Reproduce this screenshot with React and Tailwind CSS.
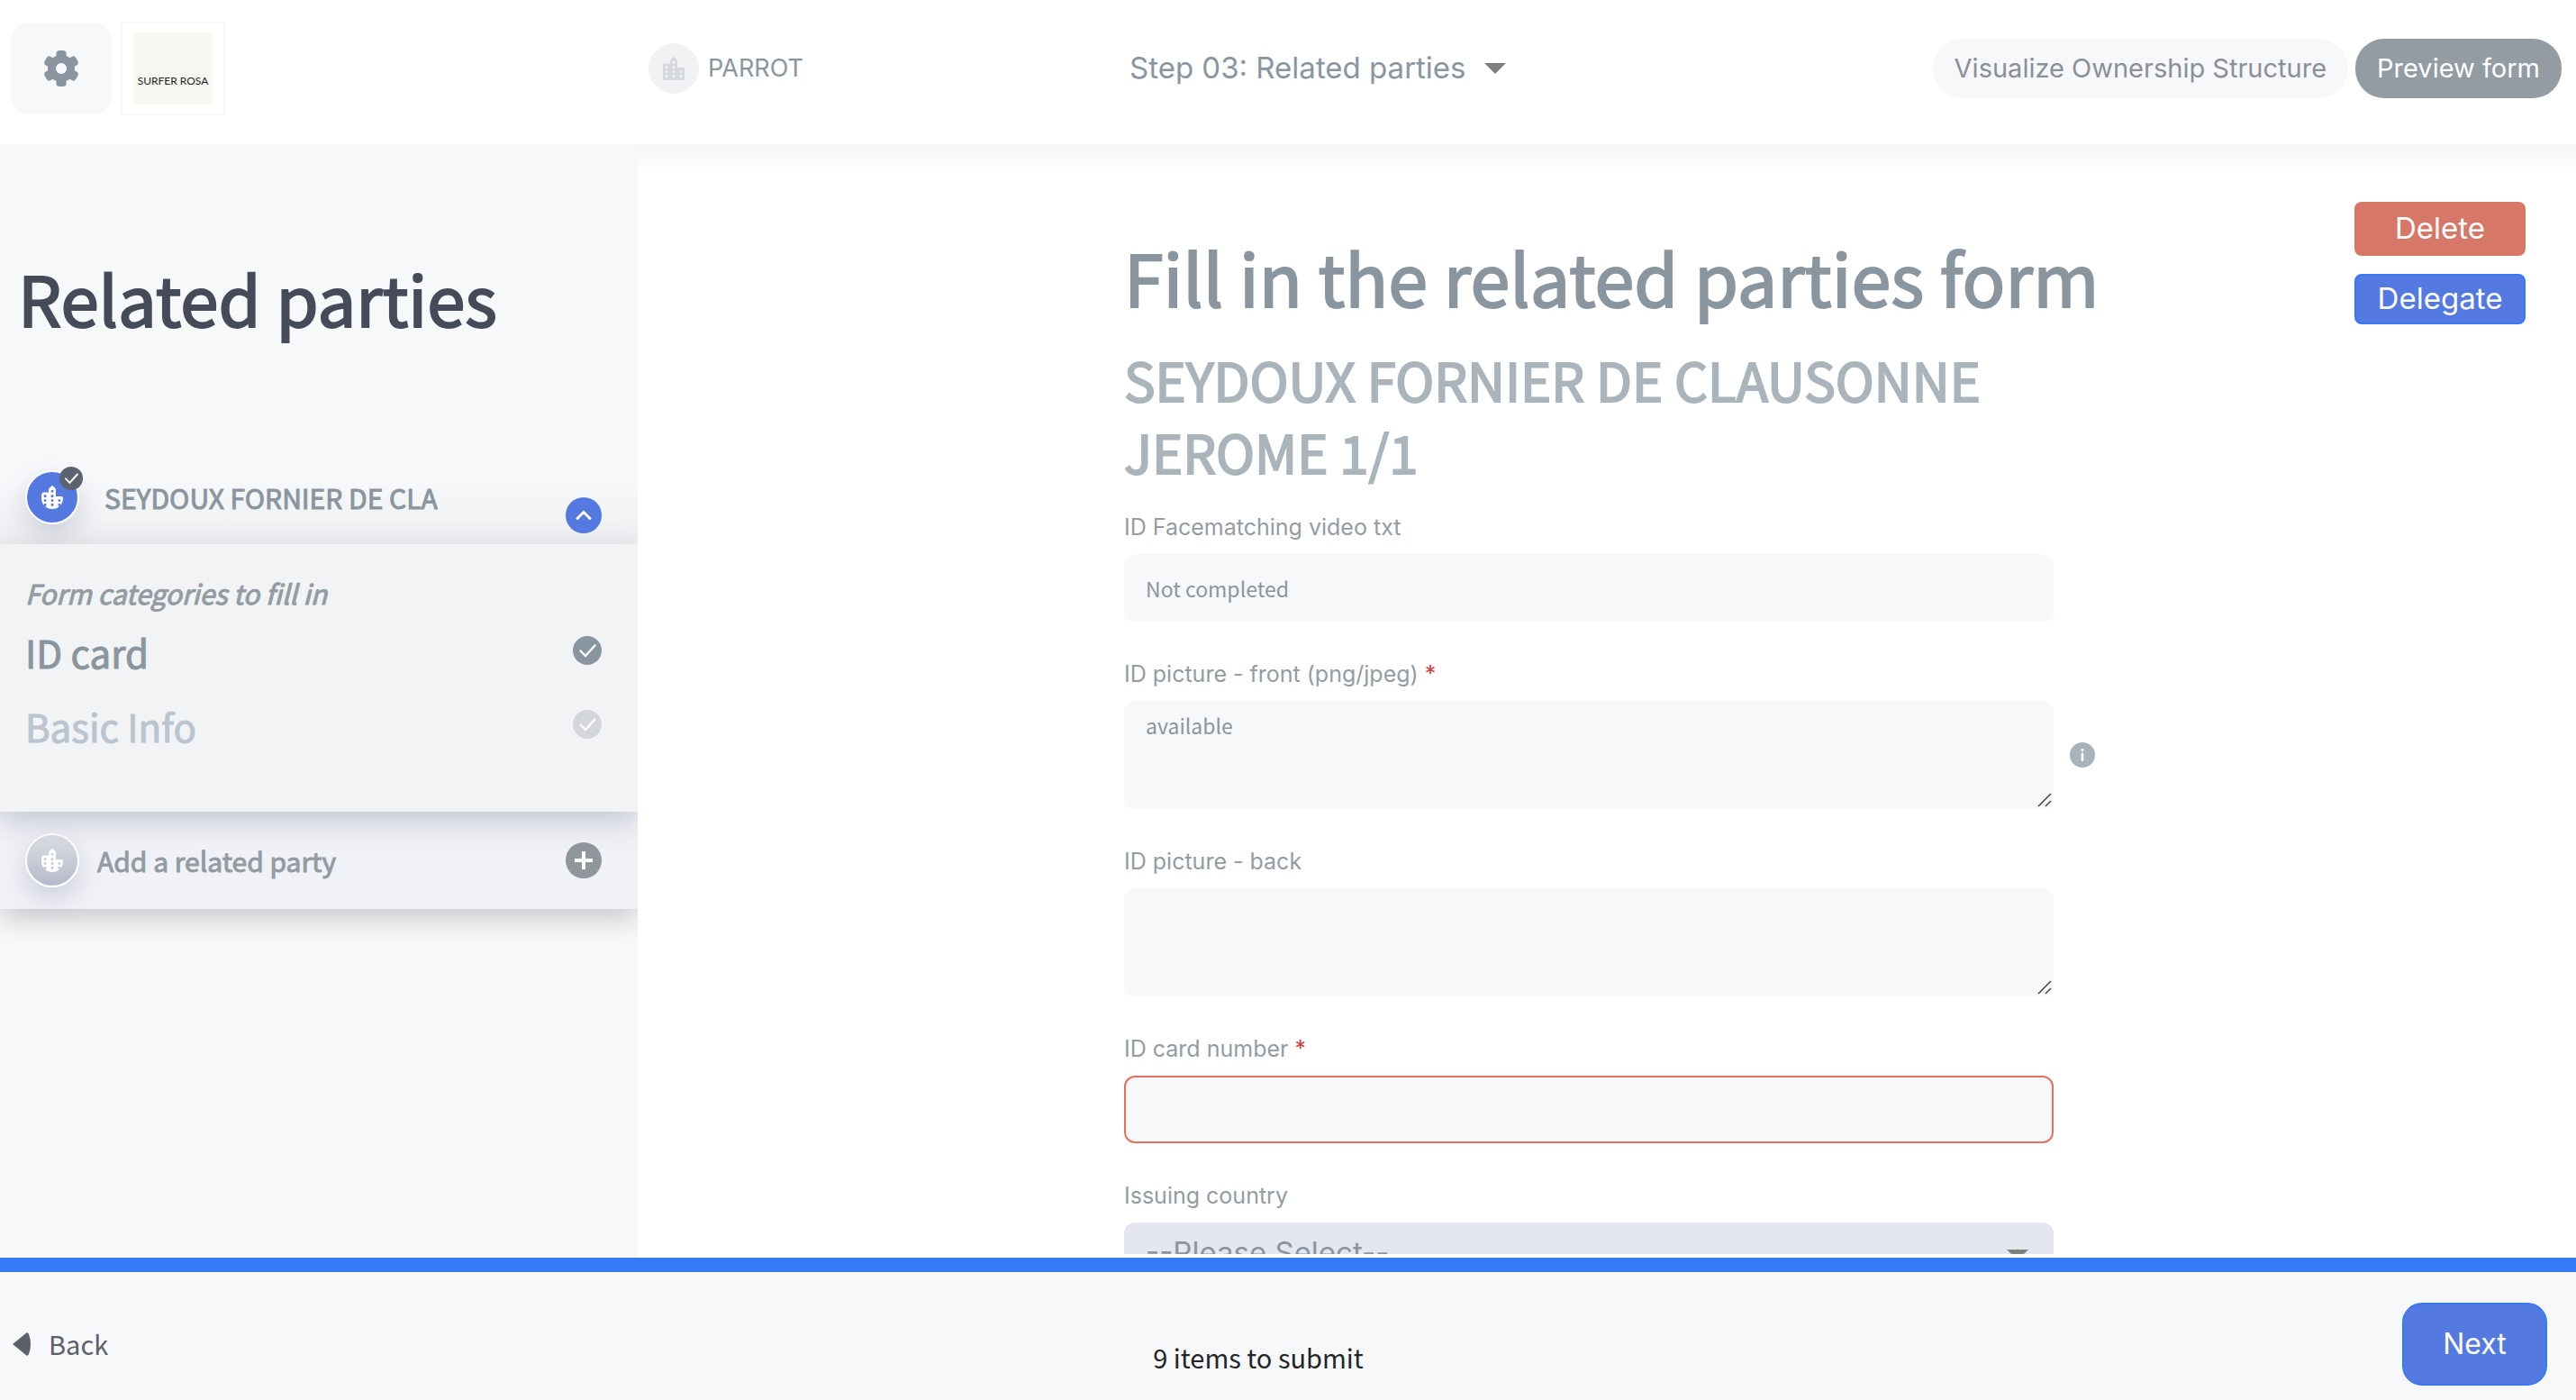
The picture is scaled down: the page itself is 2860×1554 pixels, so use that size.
import React from 'react';

const ui = "font-['Inter',sans-serif]";
const heavy = '[-webkit-text-stroke:1px_currentColor]';
const heavier = '[-webkit-text-stroke:2px_currentColor]';

function Building({ className }) {
  return (
    <svg viewBox="0 0 24 26" className={`h-[26px] w-6 ${className}`} fill="currentColor" aria-hidden="true">
      <path fillRule="evenodd" d="M2 7.500h6V4.500q0-.8.6-1.400L11 .6q1-1 2 0l2.400 2.500q.6.600.6 1.400V12h6q2 0 2 2v10q0 2-2 2H2q-2 0-2-2V9.500q0-2 2-2zM2.800 10.300v2.600h2.600v-2.600zM2.800 15.200v2.600h2.600v-2.600zM2.800 20.100v2.600h2.600v-2.600zM10.700 5v2.600h2.600V5zM10.700 10.300v2.600h2.600v-2.600zM10.700 15.200v2.600h2.600v-2.600zM10.700 20.100v2.600h2.600v-2.600zM18.600 15.200v2.600h2.600v-2.600zM18.600 20.100v2.600h2.600v-2.600z" />
    </svg>
  );
}

function Check({ className }) {
  return (
    <svg viewBox="0 0 32 32" className={className} fill="none" stroke="white" strokeWidth="2.400" strokeLinecap="round" aria-hidden="true">
      <path d="M8.500 16.500L14 22L24.500 10.500" />
    </svg>
  );
}

function Caret({ className }) {
  return (
    <svg viewBox="0 0 24 12" className={className} fill="#808080" aria-hidden="true">
      <path d="M0 0h24L12 12z" />
    </svg>
  );
}

function Grip() {
  return (
    <svg viewBox="0 0 16 16" className="pointer-events-none absolute right-0.5 bottom-0.5 h-4 w-4" stroke="#444" strokeWidth="1.500" aria-hidden="true">
      <path d="M1 15L15 1M9 15l6-6" />
    </svg>
  );
}

function Gear() {
  return (
    <svg viewBox="0 0 48 48" className="h-12 w-12" fill="#8a969f" aria-hidden="true">
      <circle cx="24" cy="24" r="15" />
      <rect x="18.500" y="4" width="11" height="40" rx="3.500" />
      <rect x="18.500" y="4" width="11" height="40" rx="3.500" transform="rotate(60 24 24)" />
      <rect x="18.500" y="4" width="11" height="40" rx="3.500" transform="rotate(120 24 24)" />
      <circle cx="24" cy="24" r="6" fill="#f7f8fa" />
    </svg>
  );
}

function Header() {
  return (
    <header className={`${ui} grid h-40 shrink-0 grid-cols-[708px_1fr_3fr] items-start bg-white pr-4`}>
      <div className="flex items-center gap-2.5 pt-6 pl-3">
        <button aria-label="Settings" className="flex h-[100px] w-28 items-center justify-center rounded-[18px] bg-[#f7f8fa]">
          <Gear />
        </button>
        <div className="flex h-[104px] w-[116px] items-center justify-center border-2 border-[#f7f7f9]">
          <div className="flex h-20 w-[88px] items-end justify-center bg-[#f8f8f2] pb-4 font-['Lato',sans-serif] text-[12px] leading-5 text-[#222]">SURFER ROSA</div>
        </div>
      </div>
      <div className="flex h-[152px] items-center gap-2.5 pl-3">
        <span className="flex h-14 w-14 items-center justify-center rounded-full bg-[#f1f2f4]">
          <Building className="text-[#d5d9de]" />
        </span>
        <span className="text-[27px] text-[#8a969f]">PARROT</span>
      </div>
      <div className="flex h-[152px] items-center justify-between pl-2">
        <label className="relative flex items-center">
          <select aria-label="Step" className="appearance-none bg-transparent pr-11 pl-1 text-[33px] text-[#8a969f]">
            <option>Step 03: Related parties</option>
          </select>
          <Caret className="pointer-events-none absolute right-0 w-6" />
        </label>
        <div className="flex gap-2 text-[29px]">
          <button className="h-[66px] rounded-[32px] bg-[#f7f8fa] px-6 text-[#8a8f9a]">Visualize Ownership Structure</button>
          <button className="h-[66px] rounded-[32px] bg-[#939ca3] px-6 text-white">Preview form</button>
        </div>
      </div>
    </header>
  );
}

function Category({ name, color, dot }) {
  return (
    <a href="#" className={`flex h-[82px] items-start justify-between text-[42px] leading-[80px] ${heavy} ${color}`}>
      {name}
      <Check className={`mt-[22px] h-8 w-8 rounded-full ${dot}`} />
    </a>
  );
}

function Sidebar() {
  return (
    <aside className="flex w-[708px] shrink-0 flex-col overflow-hidden bg-[#f7f8fa]">
      <h2 className={`mt-[110px] pl-5 text-[76px] leading-[120px] text-[#454b58] ${heavier}`}>Related parties</h2>
      <div className="mt-[114px] flex h-[100px] items-center bg-linear-to-b from-[#f7f8fa] from-30% to-[#eeeff1] pr-10 pb-1 pl-7">
        <span className="relative flex h-[60px] w-[60px] items-center justify-center rounded-full border-2 border-white bg-[#547ae2] text-white shadow-[0_12px_28px_rgba(60,70,110,0.2)]">
          <Building className="rounded-full" />
          <Check className="absolute -top-1.5 -right-1.5 h-[26px] w-[26px] rounded-full bg-[#5c6370]" />
        </span>
        <span className={`ml-7 flex-1 overflow-hidden text-[30px] whitespace-nowrap text-[#8a969f] ${heavy}`}>SEYDOUX FORNIER DE CLA</span>
        <button aria-label="Collapse" className="mt-10 flex h-10 w-10 items-center justify-center rounded-full bg-[#547ae2]">
          <svg viewBox="0 0 20 20" className="h-5 w-5" fill="none" stroke="white" strokeWidth="3" strokeLinecap="round"><path d="M3 13.500L10 6.500l7 7" /></svg>
        </button>
      </div>
      <section className="relative z-10 h-[297px] bg-[#f1f3f4] pt-[30px] pr-10 pl-7 shadow-[0_10px_30px_rgba(80,95,120,0.3)]">
        <p className={`mb-0.5 text-[30px] leading-[48px] text-[#939ca3] italic ${heavy}`}>Form categories to fill in</p>
        <Category name="ID card" color="text-[#8a969f]" dot="bg-[#8a969f]" />
        <Category name="Basic Info" color="text-[#b9c5d0]" dot="bg-[#d3d7db]" />
      </section>
      <div className="flex h-[108px] items-center bg-[#f1f2f7] pr-10 pl-7 shadow-[0_10px_30px_rgba(0,0,0,0.2)]">
        <span className="flex h-[60px] w-[60px] items-center justify-center rounded-full border-2 border-white bg-linear-to-b from-[#dcdfe3] to-[#b5bacb] text-white shadow-[0_12px_28px_rgba(60,70,110,0.2)]">
          <Building className="rounded-full" />
        </span>
        <span className={`ml-5 flex-1 text-[30px] text-[#939ca3] ${heavy}`}>Add a related party</span>
        <button aria-label="Add a related party" className="flex h-10 w-10 items-center justify-center rounded-full bg-[#8f979d]">
          <svg viewBox="0 0 20 20" className="h-5 w-5" stroke="white" strokeWidth="4"><path d="M10 0v20M0 10h20" /></svg>
        </button>
      </div>
    </aside>
  );
}

function Field({ id, label, required, children }) {
  return (
    <div className="mb-10 w-[1032px]">
      <label htmlFor={id} className={`${ui} mb-3 block text-[25px] leading-9 text-[#939ca3]`}>
        {label} {required && <span className="text-[#d0404a]">*</span>}
      </label>
      <div className="relative flex">{children}</div>
    </div>
  );
}

const box = 'block w-full rounded-xl bg-[#f7f8fa] px-6 text-[23px] text-[#8a969f] outline-none';

function FormArea() {
  return (
    <main className="mb-1 grid min-w-0 flex-1 grid-cols-[1fr_1072px_1fr] overflow-hidden bg-white bg-linear-to-b from-[#f4f6f8] to-white to-[32px]">
      <form className="col-start-2 pt-[89px]">
        <h1 className={`text-[79px] leading-[116px] whitespace-nowrap text-[#8a969f] ${heavier}`}>Fill in the related parties form</h1>
        <h2 className={`pt-4 pb-[26px] text-[58px] leading-[80px] text-[#aab4bb] ${heavier}`}>SEYDOUX FORNIER DE CLAUSONNE JEROME 1/1</h2>
        <Field id="video" label="ID Facematching video txt">
          <input id="video" defaultValue="Not completed" className={`${box} h-[75px]`} />
        </Field>
        <Field id="front" label="ID picture - front (png/jpeg)" required>
          <textarea id="front" defaultValue="available" className={`${box} h-[120px] resize-none py-2.5`} />
          <Grip />
          <button type="button" aria-label="Information" className="absolute top-[46px] -right-[46px] h-7 w-7 rounded-full bg-[#a9b3ba]">
            <svg viewBox="0 0 28 28" className="h-7 w-7" fill="white" aria-hidden="true"><circle cx="14" cy="8.500" r="1.500" /><rect x="12.700" y="11.500" width="2.600" height="9.500" rx="1.300" /></svg>
          </button>
        </Field>
        <Field id="back" label="ID picture - back">
          <textarea id="back" className={`${box} h-[120px] resize-none py-2.5`} />
          <Grip />
        </Field>
        <Field id="number" label="ID card number" required>
          <input id="number" className={`${box} h-[75px] border-2 border-[#e5705f]`} />
        </Field>
        <Field id="country" label="Issuing country">
          <select id="country" className={`${ui} h-[75px] w-full appearance-none rounded-xl bg-[#e4e7f0] px-6 pb-2 text-[33px] text-[#8a969f]`}>
            <option>--Please Select--</option>
          </select>
          <Caret className="pointer-events-none absolute top-[30px] right-7 w-6" />
        </Field>
      </form>
      <div className={`${ui} flex flex-col items-end gap-5 pt-16 pr-14 text-[33px] text-white`}>
        <button className="h-[60px] w-[190px] rounded-lg bg-[#d77767]">Delete</button>
        <button className="h-14 w-[190px] rounded-lg border-2 border-[#3679f5] bg-[#547ae2]">Delegate</button>
      </div>
    </main>
  );
}

function Footer() {
  return (
    <footer className="flex h-[158px] shrink-0 items-center justify-between border-t-16 border-[#3679f5] bg-[#f7f8fa] pr-8 pl-3.5">
      <div className="flex-1">
        <button className="mt-[18px] flex items-center gap-5 text-[29px] text-[#5c6068]">
          <svg viewBox="0 0 20 26" className="h-[26px] w-5" fill="currentColor" aria-hidden="true"><path d="M0 13L15 .8Q17-.5 18 2q4 11 0 22-1 2.500-3 1.200z" /></svg>
          Back
        </button>
      </div>
      <p className="mr-12 pt-12 text-[29px] text-[#222529]">9 items to submit</p>
      <div className="flex flex-1 justify-end">
        <button className={`${ui} mt-[18px] h-[92px] w-[161px] rounded-[22px] border-2 border-[#3679f5] bg-[#547ae2] text-[32px] text-white`}>Next</button>
      </div>
    </footer>
  );
}

export default function App() {
  return (
    <div className="flex h-screen flex-col bg-white font-['Noto_Sans_CJK_SC',sans-serif]">
      <Header />
      <div className="flex min-h-0 flex-1">
        <Sidebar />
        <FormArea />
      </div>
      <Footer />
    </div>
  );
}
